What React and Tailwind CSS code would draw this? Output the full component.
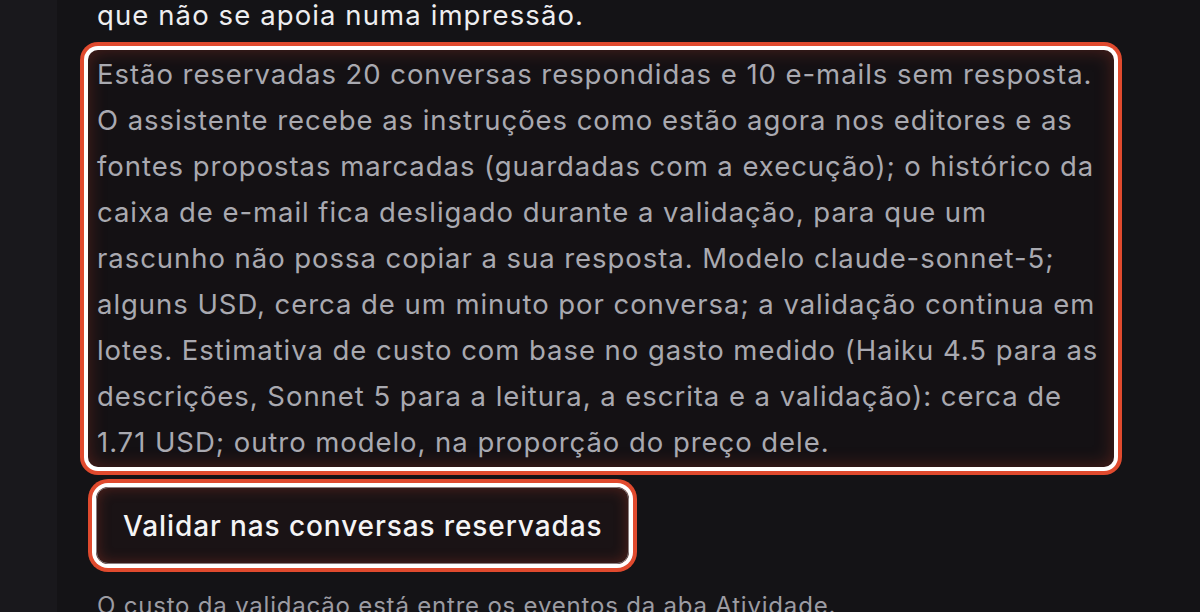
export default function App() {
  return (
    <div
      className="flex h-[612px] w-[1200px] overflow-hidden bg-[#141316]"
      style={{ fontFamily: "Inter, 'Noto Sans', sans-serif" }}
    >
      <div className="w-[57px] shrink-0 bg-[#19181c]"></div>

      <main className="flex flex-1 flex-col pl-[31px] pr-[86px]">
        <p className="-mt-[8px] pl-[9px] text-[27.5px] leading-[46px] tracking-[1.1px] text-[#eeeef0]">
          que não se apoia numa impressão.
        </p>

        <p className="mt-[12px] rounded-[10px] bg-[#141114] px-[9px] pb-[2px] pt-[1px] text-[27.5px] leading-[46px] tracking-[0.95px] text-[#a9a9b0] shadow-[0_0_0_4px_#ffffff,0_0_0_8px_#e04a2e,inset_0_0_18px_rgba(190,60,40,0.35)]">
          Estão reservadas 20 conversas respondidas e 10 e-mails sem resposta.
          O assistente recebe as instruções como estão agora nos editores e as
          fontes propostas marcadas (guardadas com a execução); o histórico da
          caixa de e-mail fica desligado durante a validação, para que um
          rascunho não possa copiar a sua resposta. Modelo claude-sonnet-5;
          alguns USD, cerca de um minuto por conversa; a validação continua em
          lotes. Estimativa de custo com base no gasto medido (Haiku 4.5 para as
          descrições, Sonnet 5 para a leitura, a escrita e a validação): cerca de
          1.71 USD; outro modelo, na proporção do preço dele.
        </p>

        <div className="mt-[20px] ml-[8px] self-start rounded-[12px] shadow-[0_0_0_4px_#ffffff,0_0_0_8px_#e04a2e]">
          <button className="h-[77px] rounded-[12px] border border-[#8a7f80] bg-[#1a1315] px-[26px] text-[28px] font-medium tracking-[0.9px] text-[#f4f4f5] shadow-[inset_0_0_14px_rgba(190,60,40,0.35)]">
            Validar nas conversas reservadas
          </button>
        </div>

        <p className="mt-[25px] pl-[9px] text-[24px] leading-[34px] tracking-[0.8px] text-[#9c9ca3]">
          O custo da validação está entre os eventos da aba Atividade.
        </p>
      </main>
    </div>
  );
}
